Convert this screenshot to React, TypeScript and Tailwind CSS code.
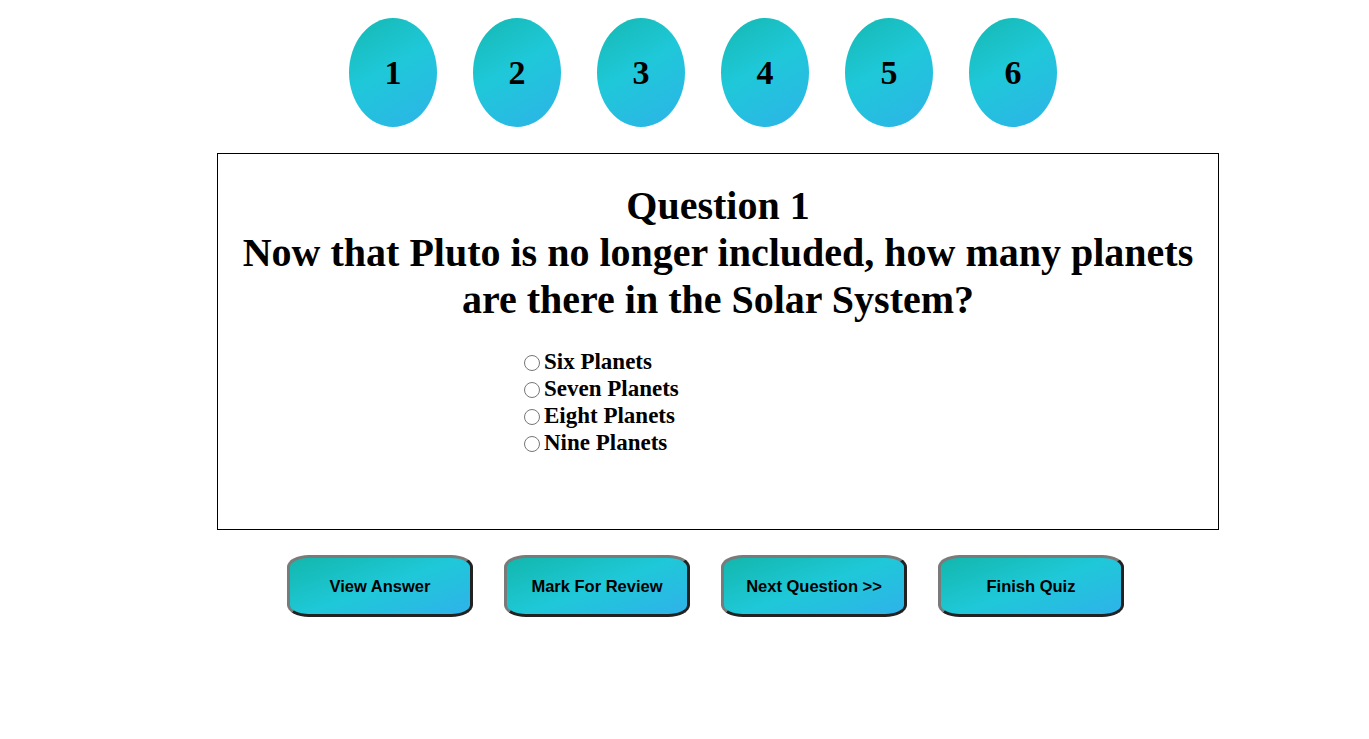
const questions = [1, 2, 3, 4, 5, 6];

const options = ['Six Planets', 'Seven Planets', 'Eight Planets', 'Nine Planets'];

const actions = ['View Answer', 'Mark For Review', 'Next Question >>', 'Finish Quiz'];

export default function App() {
  return (
    <div className="min-h-[739px] bg-white text-black">
      <div className="flex justify-center gap-[36px] pl-[37px] pt-[18px]">
        {questions.map((n) => (
          <button
            key={n}
            className="flex h-[109px] w-[88px] items-center justify-center rounded-[50%] bg-[linear-gradient(150deg,#14b8b0_0%,#1fc8d9_45%,#2db3e8_100%)] font-['Liberation_Serif',serif] text-[34px] font-bold text-black"
          >
            {n}
          </button>
        ))}
      </div>

      <div className="ml-[217px] mt-[26px] h-[377px] w-[1002px] border border-black font-['Liberation_Serif',serif]">
        <h1 className="px-6 pt-[28px] text-center text-[40px] font-bold leading-[47px]">
          Question 1
          <br />
          Now that Pluto is no longer included, how many planets are there in the Solar System?
        </h1>
        <div className="mt-[26px] flex flex-col pl-[306px]">
          {options.map((opt) => (
            <label key={opt} className="flex h-[27px] items-center text-[23px] font-bold">
              <input type="radio" name="answer" className="mr-[4px] h-[16px] w-[16px] accent-gray-500" />
              {opt}
            </label>
          ))}
        </div>
      </div>

      <div className="ml-[287px] mt-[25px] flex gap-[31px]">
        {actions.map((label) => (
          <button
            key={label}
            className="h-[62px] w-[186px] rounded-[22px/12px] border-[3px] border-t-[#7a7a7a] border-l-[#7a7a7a] border-r-[#222] border-b-[#222] bg-[linear-gradient(160deg,#12b7ac_0%,#1fc8d8_50%,#2fb2ea_100%)] font-['Liberation_Sans',Arial,sans-serif] text-[16.5px] font-bold text-black"
          >
            {label}
          </button>
        ))}
      </div>
    </div>
  );
}
